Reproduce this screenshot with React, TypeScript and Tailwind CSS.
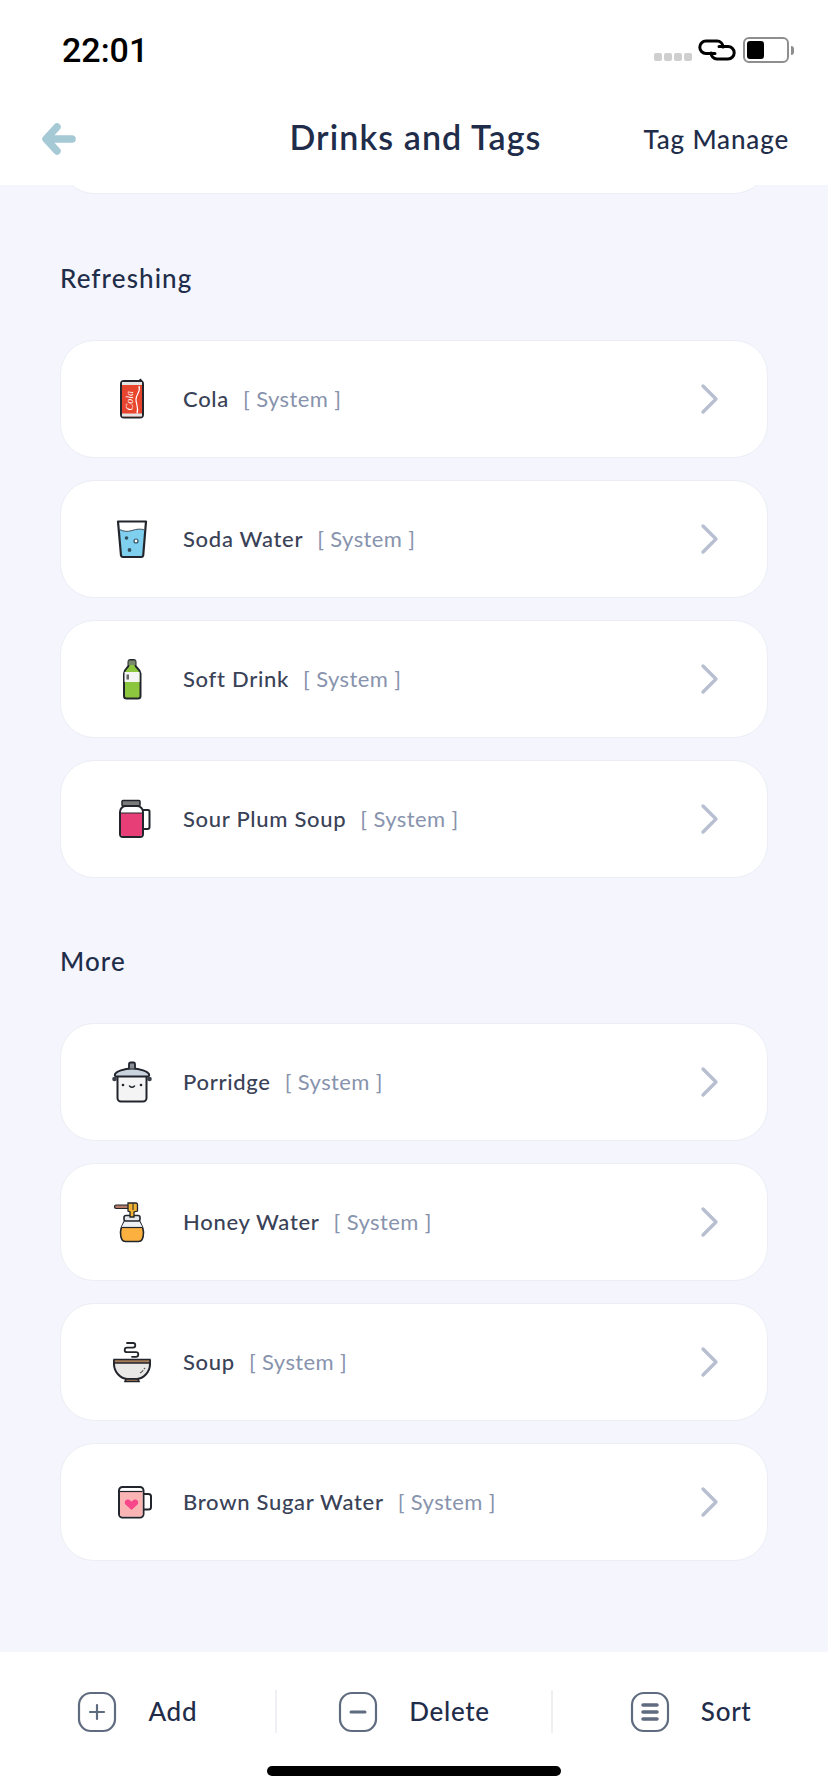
import type { ReactNode } from 'react';

const ink = '#22252c';

function ColaIcon() {
    return (
        <svg width="48" height="48" viewBox="0 0 48 48">
            <path d="M32 4l1.500 2.500" stroke={ink} strokeWidth="2" fill="none" />
            <rect x="13" y="6" width="22" height="36.500" rx="3" fill="#e8452f" stroke={ink} strokeWidth="2" />
            <rect x="14" y="7" width="20" height="3" fill="#e4e4e4" />
            <rect x="14" y="38.500" width="20" height="3" fill="#e4e4e4" />
            <path d="M31 11c2 6-3 8-3 13.500s3 8 1 14" stroke="#fff" strokeWidth="1.200" fill="none" />
            <text x="0" y="0" transform="translate(24.500 35.500) rotate(-90)" fontSize="10" fontFamily="'Liberation Serif', serif" fontStyle="italic" fill="#fff">Cola</text>
        </svg>
    );
}

function GlassIcon() {
    return (
        <svg width="48" height="48" viewBox="0 0 48 48">
            <path d="M11.500 14c4 2 8 3 12.500 1.500s9-2 12.500-.5l-2 26a2 2 0 0 1-2 1.500H15.500a2 2 0 0 1-2-1.500z" fill="#7fd0ee" />
            <path d="M10 6.500h28l-2.800 34a2 2 0 0 1-2 1.500H15a2 2 0 0 1-2-1.500z" fill="none" stroke={ink} strokeWidth="2.200" strokeLinejoin="round" />
            <path d="M11.500 14.500c4 2 8 2.500 12.500 1s9-2 12.500-.5" fill="none" stroke="#4a5560" strokeWidth="1" />
            <circle cx="18.500" cy="23" r="1.800" fill="#33505e" />
            <circle cx="28" cy="26" r="2" fill="#fff" stroke="#33505e" strokeWidth="1.200" />
            <circle cx="21.500" cy="35" r="1.900" fill="#33505e" />
        </svg>
    );
}

function BottleIcon() {
    return (
        <svg width="48" height="48" viewBox="0 0 48 48">
            <path d="M20.500 10.500V7a2 2 0 0 1 2-2h3a2 2 0 0 1 2 2v3.500c0 2 5 3.500 5 8V41a2.500 2.500 0 0 1-2.500 2.500H18.500A2.500 2.500 0 0 1 16 41V18.500c0-4.500 4.500-6 4.500-8z" fill="#8cc63f" stroke={ink} strokeWidth="2" />
            <path d="M20.500 5.500h7v4.500h-7z" fill="#7a8a6a" />
            <rect x="16.500" y="17" width="15" height="10" fill="#f4f4f4" />
            <rect x="18.500" y="19.500" width="2.500" height="5" fill="#666" />
        </svg>
    );
}

function JarIcon() {
    return (
        <svg width="48" height="48" viewBox="0 0 48 48">
            <path d="M35 15h5a1.500 1.500 0 0 1 1.500 1.500V32a2 2 0 0 1-2 2H35" fill="#fff" stroke={ink} strokeWidth="2" />
            <rect x="14" y="5.500" width="18" height="5.500" rx="1" fill="#7b7b7b" stroke={ink} strokeWidth="1.500" />
            <path d="M12 17a6 6 0 0 1 6-6h11a6 6 0 0 1 6 6v22a3 3 0 0 1-3 3H15a3 3 0 0 1-3-3z" fill="#fff" stroke={ink} strokeWidth="2" />
            <path d="M13 18h21v21a2 2 0 0 1-2 2H15a2 2 0 0 1-2-2z" fill="#e83e78" />
            <path d="M13 18h21" stroke={ink} strokeWidth="1" />
        </svg>
    );
}

function PotIcon() {
    return (
        <svg width="48" height="48" viewBox="0 0 48 48">
            <circle cx="6.500" cy="21" r="2.300" fill="#3a3f48" />
            <circle cx="41.500" cy="21" r="2.300" fill="#3a3f48" />
            <path d="M9.500 17v23a3.500 3.500 0 0 0 3.500 3.500h22a3.500 3.500 0 0 0 3.500-3.500V17z" fill="#f4f4f5" stroke={ink} strokeWidth="2" />
            <path d="M8.500 18.500c-1.500 0-2-1-1.500-2.300 1-2.600 9-5.700 17-5.700s16 3.100 17 5.700c.5 1.300 0 2.300-1.500 2.300z" fill="#c9d4de" stroke={ink} strokeWidth="2" />
            <path d="M21 10.500V6a1.500 1.500 0 0 1 1.500-1.500h3A1.500 1.500 0 0 1 27 6v4.500" fill="#8a8f96" stroke={ink} strokeWidth="1.800" />
            <circle cx="15" cy="27" r="1.300" fill={ink} />
            <circle cx="33" cy="27" r="1.300" fill={ink} />
            <path d="M21.500 28c1.500 1.500 3.500 1.500 5 0" stroke={ink} strokeWidth="1.500" fill="none" strokeLinecap="round" />
        </svg>
    );
}

function HoneyIcon() {
    return (
        <svg width="48" height="48" viewBox="0 0 48 48">
            <path d="M12.500 34c0-5 3-8.500 4-11h15c1 2.500 4 6 4 11 0 5-1 9.500-5 9.500h-13c-4 0-5-4.500-5-9.500z" fill="#fbb040" stroke={ink} strokeWidth="1.600" />
            <path d="M13.500 29.500c.8-2.600 2.500-4.800 3.500-6.500h14c1 1.700 2.700 3.900 3.500 6.500z" fill="#eef1f3" />
            <path d="M13.500 29.500h21" stroke={ink} strokeWidth="1.200" />
            <rect x="16" y="17.500" width="16" height="5.500" rx="2" fill="#e6e8ea" stroke={ink} strokeWidth="1.600" />
            <rect x="6.500" y="7" width="15" height="3.500" rx="1.700" fill="#b57a68" stroke={ink} strokeWidth="1.200" />
            <path d="M20 5h8a1.500 1.500 0 0 1 1.500 1.500V13l-3.500 1v5h-4v-5l-2-1z" fill="#f0b232" stroke={ink} strokeWidth="1.300" />
            <path d="M25 5v7" stroke={ink} strokeWidth="1" />
        </svg>
    );
}

function SoupIcon() {
    return (
        <svg width="48" height="48" viewBox="0 0 48 48">
            <path d="M19 5h6a2.300 2.300 0 0 1 0 4.600h-6a2.300 2.300 0 0 0 0 4.600h9a2.300 2.300 0 0 1 0 4.600h-4" fill="none" stroke={ink} strokeWidth="1.800" strokeLinecap="round" />
            <path d="M6 23h36v3c0 8.500-7 14.500-13 15H19c-6-.5-13-6.500-13-15z" fill="#eae7e7" stroke={ink} strokeWidth="2" />
            <rect x="6" y="21.500" width="36" height="3.500" fill="#a87c58" stroke={ink} strokeWidth="1.500" />
            <path d="M18 41h12l1 2.500H17z" fill="#a87c58" stroke={ink} strokeWidth="1.600" />
            <path d="M32 35c1.500-.6 2.500-1.600 3.200-2.800" stroke="#555" strokeWidth="1.200" fill="none" />
            <circle cx="36.500" cy="30.500" r=".8" fill="#555" />
        </svg>
    );
}

function MugIcon() {
    return (
        <svg width="48" height="48" viewBox="0 0 48 48">
            <path d="M35 16h5.500a2.500 2.500 0 0 1 2.500 2.500V29a2.500 2.500 0 0 1-2.500 2.500H35" fill="#fff" stroke={ink} strokeWidth="2" />
            <rect x="11" y="9" width="24.500" height="30.500" rx="3.500" fill="#fff" stroke={ink} strokeWidth="2" />
            <path d="M12 13.500h22.500v23a2 2 0 0 1-2 2H14a2 2 0 0 1-2-2z" fill="#fbb4b4" />
            <path d="M12 13.500h22.500" stroke={ink} strokeWidth="1.200" />
            <path d="M23.500 32l-5.500-5c-2.800-2.700-.2-6.800 3.200-5.200 1 .5 1.800 1.200 2.300 2 .5-.8 1.300-1.500 2.300-2 3.400-1.600 6 2.500 3.200 5.200z" fill="#f7468a" />
        </svg>
    );
}

function LinkIcon() {
    return (
        <svg width="38" height="22" viewBox="0 0 38 22" fill="none" stroke="#000" strokeWidth="3" strokeLinecap="round">
            <path d="M17 14.500H8a6.200 6.200 0 0 1 0-12.400h11a6.200 6.200 0 0 1 6 6" />
            <path d="M21 7.500h9a6.200 6.200 0 0 1 0 12.400H19a6.200 6.200 0 0 1-6-6" />
        </svg>
    );
}

function StatusBar() {
    return (
        <div className="h-[92px] flex items-center justify-between pl-[62px] pr-[34px] pt-[8px]">
            <span className="text-[34px] font-medium text-black font-['Roboto',sans-serif]">22:01</span>
            <div className="flex items-center">
                <div className="flex gap-[2px] mt-[14px] mr-[6px]">
                    {[0, 1, 2, 3].map((i) => <span key={i} className="w-[8px] h-[8px] rounded-[2px] bg-[#cfcfcf]" />)}
                </div>
                <LinkIcon />
                <div className="ml-[7px] w-[46px] h-[26px] rounded-[6px] border-2 border-[#8e8e8e] p-[2px]">
                    <div className="w-[17px] h-full rounded-[3px] bg-black" />
                </div>
                <div className="ml-[2px] w-[3px] h-[9px] rounded-r-full bg-[#8e8e8e]" />
            </div>
        </div>
    );
}

function NavBar() {
    return (
        <div className="h-[93px] grid grid-cols-[1fr_auto_1fr] items-center pl-[42px] pr-[39px]">
            <svg width="34" height="32" viewBox="0 0 34 32" fill="none" stroke="#a6c9d6" strokeWidth="7.500" strokeLinecap="round" strokeLinejoin="round">
                <path d="M30 16H6M15 4L4 16l11 12" />
            </svg>
            <h1 className="text-[34px] font-semibold text-[#1f2d4a] tracking-[1.1px] mb-[4px]">Drinks and Tags</h1>
            <span className="mt-[2px] text-right text-[26px] font-medium text-[#1f2d4a] tracking-[0.85px]">Tag Manage</span>
        </div>
    );
}

function DrinkRow({ icon, name }: { icon: ReactNode, name: string }) {
    return (
        <div className="h-[118px] rounded-[34px] bg-white border-[1.5px] border-[#eceef5] flex items-center pl-[47px] pr-[47px]">
            <div className="w-[48px] h-[48px] shrink-0">{icon}</div>
            <span className="ml-[27px] pb-[2px] text-[22px] font-medium text-[#3a4257] tracking-[0.7px]">{name}</span>
            <span className="ml-[14px] pb-[2px] text-[22px] text-[#8893ad] tracking-[0.4px]">[ System ]</span>
            <svg className="ml-auto" width="20" height="32" viewBox="0 0 20 32" fill="none" stroke="#b7bfd0" strokeWidth="3.400" strokeLinecap="round" strokeLinejoin="round">
                <path d="M3 3l13 13L3 29" />
            </svg>
        </div>
    );
}

function Section({ title, items, className }: { title: string, items: { icon: ReactNode, name: string }[], className: string }) {
    return (
        <section className={className}>
            <h2 className="h-[30px] leading-[30px] ml-[60px] text-[26px] font-medium text-[#1f2d4a] tracking-[1.1px]">{title}</h2>
            <div className="mt-[47px] mx-[60px] flex flex-col gap-[22px]">
                {items.map((item) => <DrinkRow key={item.name} {...item} />)}
            </div>
        </section>
    );
}

function ToolButton({ icon, label }: { icon: ReactNode, label: string }) {
    return (
        <div className="flex-1 h-[43px] flex items-center justify-center gap-[31px]">
            <svg width="40" height="42" viewBox="0 0 40 42" fill="none" stroke="#5f6b7e" strokeWidth="2.200" strokeLinecap="round">
                <rect x="2" y="2" width="36" height="38" rx="12" />
                {icon}
            </svg>
            <span className="text-[26px] font-medium text-[#1f2d4a] tracking-[0.7px]">{label}</span>
        </div>
    );
}

const refreshing = [
    { icon: <ColaIcon />, name: 'Cola' },
    { icon: <GlassIcon />, name: 'Soda Water' },
    { icon: <BottleIcon />, name: 'Soft Drink' },
    { icon: <JarIcon />, name: 'Sour Plum Soup' },
];

const more = [
    { icon: <PotIcon />, name: 'Porridge' },
    { icon: <HoneyIcon />, name: 'Honey Water' },
    { icon: <SoupIcon />, name: 'Soup' },
    { icon: <MugIcon />, name: 'Brown Sugar Water' },
];

export default function App() {
    return (
        <div className="w-[828px] h-[1792px] flex flex-col overflow-hidden bg-[#f4f5fd] font-['Lato',sans-serif]">
            <header className="bg-white">
                <StatusBar />
                <NavBar />
            </header>
            <main className="flex-1 overflow-hidden">
                {/* the row scrolled under the header, only its bottom edge shows */}
                <div className="mx-[60px] h-[9px] overflow-hidden">
                    <div className="h-[118px] -mt-[109px] rounded-[34px] bg-white border-[1.5px] border-[#eceef5]" />
                </div>
                <Section title="Refreshing" items={refreshing} className="mt-[69px]" />
                <Section title="More" items={more} className="mt-[68px]" />
            </main>
            <footer className="h-[140px] bg-white">
                <div className="pt-[38px] flex divide-x-2 divide-[#eef0f4]">
                    <ToolButton label="Add" icon={<path d="M20 14v14M13 21h14" />} />
                    <ToolButton label="Delete" icon={<path d="M13 21h14" strokeWidth="3" />} />
                    <ToolButton label="Sort" icon={<path d="M13 14h14M13 21h14M13 28h14" strokeWidth="3.500" />} />
                </div>
                <div className="mt-[33px] mx-auto w-[294px] h-[10px] rounded-full bg-black" />
            </footer>
        </div>
    );
}
